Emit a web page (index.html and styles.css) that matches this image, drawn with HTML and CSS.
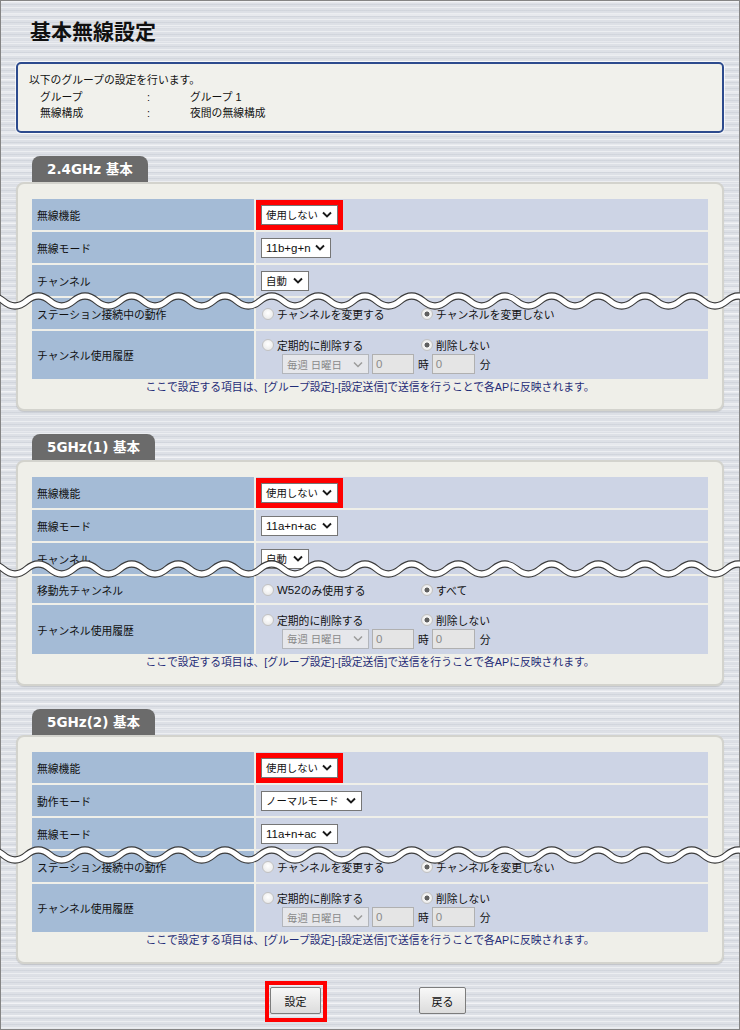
FILE: index.html
```html
<!DOCTYPE html>
<html lang="ja">
<head>
<meta charset="utf-8">
<title>基本無線設定</title>
<link rel="stylesheet" href="styles.css">
</head>
<body>
<div class="page">
  <h1 class="title">基本無線設定</h1>

  <div class="info">
    <p class="info-lead">以下のグループの設定を行います。</p>
    <div class="info-grid">
      <span>グループ</span><span>:</span><span>グループ 1</span>
      <span>無線構成</span><span>:</span><span>夜間の無線構成</span>
    </div>
  </div>

  <section class="sec">
    <div class="tab">2.4GHz 基本</div>
    <div class="panel">
      <div class="rows">
        <div class="lbl">無線機能</div>
        <div class="val"><span class="select w77 hl"><span>使用しない</span><svg class="chev" viewBox="0 0 10 7"><path d="M1 1.5 5 5.5 9 1.5"/></svg></span></div>
        <div class="lbl">無線モード</div>
        <div class="val"><span class="select w70"><span class="lat">11b+g+n</span><svg class="chev" viewBox="0 0 10 7"><path d="M1 1.5 5 5.5 9 1.5"/></svg></span></div>
        <div class="lbl">チャンネル</div>
        <div class="val"><span class="select w48"><span>自動</span><svg class="chev" viewBox="0 0 10 7"><path d="M1 1.5 5 5.5 9 1.5"/></svg></span></div>
        <div class="lbl cut">ステーション接続中の動作
          <svg class="wave wave-s1" viewBox="0 0 740 20"><path class="edge" d="M-20 10q11.667-10 23.333 0t23.333 0t23.333 0t23.333 0t23.333 0t23.333 0t23.333 0t23.333 0t23.333 0t23.333 0t23.333 0t23.333 0t23.333 0t23.333 0t23.333 0t23.333 0t23.333 0t23.333 0t23.333 0t23.333 0t23.333 0t23.333 0t23.333 0t23.333 0t23.333 0t23.333 0t23.333 0t23.333 0t23.333 0t23.333 0t23.333 0t23.333 0t23.333 0t23.333 0"/><path class="band" d="M-20 10q11.667-10 23.333 0t23.333 0t23.333 0t23.333 0t23.333 0t23.333 0t23.333 0t23.333 0t23.333 0t23.333 0t23.333 0t23.333 0t23.333 0t23.333 0t23.333 0t23.333 0t23.333 0t23.333 0t23.333 0t23.333 0t23.333 0t23.333 0t23.333 0t23.333 0t23.333 0t23.333 0t23.333 0t23.333 0t23.333 0t23.333 0t23.333 0t23.333 0t23.333 0t23.333 0"/></svg>
        </div>
        <div class="val"><span class="opt"><span class="radio"></span>チャンネルを変更する</span><span class="opt"><span class="radio on"></span>チャンネルを変更しない</span></div>
        <div class="lbl">チャンネル使用履歴</div>
        <div class="val hist">
          <div class="hist-top"><span class="opt"><span class="radio"></span>定期的に削除する</span><span class="opt"><span class="radio on"></span>削除しない</span></div>
          <div class="hist-bot"><span class="select w87 dis"><span>毎週 日曜日</span><svg class="chev" viewBox="0 0 10 7"><path d="M1 1.5 5 5.5 9 1.5"/></svg></span><span class="inp w42">0</span><span class="unit">時</span><span class="inp w43">0</span><span class="unit unit-last">分</span></div>
        </div>
      </div>
      <p class="note">ここで設定する項目は、[グループ設定]-[設定送信]で送信を行うことで各APに反映されます。</p>
    </div>
  </section>

  <section class="sec">
    <div class="tab">5GHz(1) 基本</div>
    <div class="panel">
      <div class="rows rows-s2">
        <div class="lbl">無線機能</div>
        <div class="val"><span class="select w77 hl"><span>使用しない</span><svg class="chev" viewBox="0 0 10 7"><path d="M1 1.5 5 5.5 9 1.5"/></svg></span></div>
        <div class="lbl">無線モード</div>
        <div class="val"><span class="select w77"><span class="lat">11a+n+ac</span><svg class="chev" viewBox="0 0 10 7"><path d="M1 1.5 5 5.5 9 1.5"/></svg></span></div>
        <div class="lbl">チャンネル</div>
        <div class="val"><span class="select w48"><span>自動</span><svg class="chev" viewBox="0 0 10 7"><path d="M1 1.5 5 5.5 9 1.5"/></svg></span></div>
        <div class="lbl cut">移動先チャンネル
          <svg class="wave wave-s2" viewBox="0 0 740 20"><path class="edge" d="M-20 10q11.667-10 23.333 0t23.333 0t23.333 0t23.333 0t23.333 0t23.333 0t23.333 0t23.333 0t23.333 0t23.333 0t23.333 0t23.333 0t23.333 0t23.333 0t23.333 0t23.333 0t23.333 0t23.333 0t23.333 0t23.333 0t23.333 0t23.333 0t23.333 0t23.333 0t23.333 0t23.333 0t23.333 0t23.333 0t23.333 0t23.333 0t23.333 0t23.333 0t23.333 0t23.333 0"/><path class="band" d="M-20 10q11.667-10 23.333 0t23.333 0t23.333 0t23.333 0t23.333 0t23.333 0t23.333 0t23.333 0t23.333 0t23.333 0t23.333 0t23.333 0t23.333 0t23.333 0t23.333 0t23.333 0t23.333 0t23.333 0t23.333 0t23.333 0t23.333 0t23.333 0t23.333 0t23.333 0t23.333 0t23.333 0t23.333 0t23.333 0t23.333 0t23.333 0t23.333 0t23.333 0t23.333 0t23.333 0"/></svg>
        </div>
        <div class="val"><span class="opt"><span class="radio"></span><span class="lat-s">W52</span>のみ使用する</span><span class="opt"><span class="radio on"></span>すべて</span></div>
        <div class="lbl">チャンネル使用履歴</div>
        <div class="val hist">
          <div class="hist-top"><span class="opt"><span class="radio"></span>定期的に削除する</span><span class="opt"><span class="radio on"></span>削除しない</span></div>
          <div class="hist-bot"><span class="select w87 dis"><span>毎週 日曜日</span><svg class="chev" viewBox="0 0 10 7"><path d="M1 1.5 5 5.5 9 1.5"/></svg></span><span class="inp w42">0</span><span class="unit">時</span><span class="inp w43">0</span><span class="unit unit-last">分</span></div>
        </div>
      </div>
      <p class="note">ここで設定する項目は、[グループ設定]-[設定送信]で送信を行うことで各APに反映されます。</p>
    </div>
  </section>

  <section class="sec">
    <div class="tab">5GHz(2) 基本</div>
    <div class="panel">
      <div class="rows">
        <div class="lbl">無線機能</div>
        <div class="val"><span class="select w77 hl"><span>使用しない</span><svg class="chev" viewBox="0 0 10 7"><path d="M1 1.5 5 5.5 9 1.5"/></svg></span></div>
        <div class="lbl">動作モード</div>
        <div class="val"><span class="select w101"><span>ノーマルモード</span><svg class="chev" viewBox="0 0 10 7"><path d="M1 1.5 5 5.5 9 1.5"/></svg></span></div>
        <div class="lbl">無線モード</div>
        <div class="val"><span class="select w77"><span class="lat">11a+n+ac</span><svg class="chev" viewBox="0 0 10 7"><path d="M1 1.5 5 5.5 9 1.5"/></svg></span></div>
        <div class="lbl cut">ステーション接続中の動作
          <svg class="wave wave-s3" viewBox="0 0 740 20"><path class="edge" d="M-20 10q11.667-10 23.333 0t23.333 0t23.333 0t23.333 0t23.333 0t23.333 0t23.333 0t23.333 0t23.333 0t23.333 0t23.333 0t23.333 0t23.333 0t23.333 0t23.333 0t23.333 0t23.333 0t23.333 0t23.333 0t23.333 0t23.333 0t23.333 0t23.333 0t23.333 0t23.333 0t23.333 0t23.333 0t23.333 0t23.333 0t23.333 0t23.333 0t23.333 0t23.333 0t23.333 0"/><path class="band" d="M-20 10q11.667-10 23.333 0t23.333 0t23.333 0t23.333 0t23.333 0t23.333 0t23.333 0t23.333 0t23.333 0t23.333 0t23.333 0t23.333 0t23.333 0t23.333 0t23.333 0t23.333 0t23.333 0t23.333 0t23.333 0t23.333 0t23.333 0t23.333 0t23.333 0t23.333 0t23.333 0t23.333 0t23.333 0t23.333 0t23.333 0t23.333 0t23.333 0t23.333 0t23.333 0t23.333 0"/></svg>
        </div>
        <div class="val"><span class="opt"><span class="radio"></span>チャンネルを変更する</span><span class="opt"><span class="radio on"></span>チャンネルを変更しない</span></div>
        <div class="lbl">チャンネル使用履歴</div>
        <div class="val hist">
          <div class="hist-top"><span class="opt"><span class="radio"></span>定期的に削除する</span><span class="opt"><span class="radio on"></span>削除しない</span></div>
          <div class="hist-bot"><span class="select w87 dis"><span>毎週 日曜日</span><svg class="chev" viewBox="0 0 10 7"><path d="M1 1.5 5 5.5 9 1.5"/></svg></span><span class="inp w42">0</span><span class="unit">時</span><span class="inp w43">0</span><span class="unit unit-last">分</span></div>
        </div>
      </div>
      <p class="note">ここで設定する項目は、[グループ設定]-[設定送信]で送信を行うことで各APに反映されます。</p>
    </div>
  </section>

  <div class="actions">
    <span class="hl-box"><button class="btn btn-set" type="button">設定</button></span>
    <button class="btn btn-back" type="button">戻る</button>
  </div>
</div>
</body>
</html>
```

FILE: styles.css
```css
html, body {
  margin: 0;
  padding: 0;
  background: #dee1e7;
}

.page {
  width: 740px;
  height: 1030px;
  box-sizing: border-box;
  border: 1px solid #858585;
  padding: 0 15px;
  font-family: "Liberation Sans", "Noto Sans CJK JP", sans-serif;
  font-size: 10.8px;
  color: #111;
  background-color: #dde0e6;
  background-image:
    repeating-linear-gradient(180deg, rgba(255,255,255,0.45) 0 1px, rgba(255,255,255,0) 1px 3px, rgba(110,120,140,0.10) 3px 4px, rgba(255,255,255,0) 4px 6px),
    repeating-linear-gradient(180deg, rgba(255,255,255,0.30) 0 2px, rgba(0,0,0,0) 2px 13px);
}

.title {
  margin: 14px 0 0 14px;
  font: 700 21px/30px "Noto Sans CJK JP", sans-serif;
  color: #111;
}

.info {
  margin-top: 17px;
  border: 2px solid #2d4b8e;
  border-radius: 5px;
  background: #f1f1ec;
  padding: 8px 11px 9.5px;
  line-height: 16.5px;
  box-shadow: 0 0 0 1px rgba(255,255,255,0.7);
}

.info-lead {
  margin: 0;
}

.info-grid {
  display: grid;
  grid-template-columns: 107px 43px auto;
  padding-left: 11px;
}

.sec {
  margin-top: 23px;
}

.tab {
  width: max-content;
  margin-left: 16px;
  height: 26px;
  padding: 0 15px;
  background: #6b6b6b;
  color: #fff;
  border-radius: 8px 8px 0 0;
  font: 700 13.5px/26px "DejaVu Sans", "Noto Sans CJK JP", sans-serif;
}

.panel {
  border: 2px solid #d3d3cd;
  border-radius: 8px;
  background: #efefe9;
  padding: 15px 14px 14px;
  box-shadow: 0 1px 1px rgba(0,0,0,0.12);
}

.rows {
  display: grid;
  grid-template-columns: 222px 452px;
  grid-template-rows: 31px 31px 31px 31px 48px;
  gap: 2px;
}

.rows-s2 {
  grid-template-rows: 31px 31px 31px 27px 49px;
}

.lbl {
  background: #a4bbd6;
  display: flex;
  align-items: center;
  padding-left: 5px;
  color: #111;
}

.val {
  background: #cdd4e5;
  display: flex;
  align-items: center;
  padding-left: 5px;
}

.cut {
  position: relative;
}

.wave {
  position: absolute;
  left: -32px;
  width: 740px;
  height: 20px;
  z-index: 3;
}

.wave-s1 { top: -7px; }
.wave-s2 { top: -17px; }
.wave-s3 { top: -6px; }

.wave .edge {
  fill: none;
  stroke: #3a3a3a;
  stroke-width: 7;
}

.wave .band {
  fill: none;
  stroke: #ffffff;
  stroke-width: 5;
}

.select {
  display: inline-flex;
  align-items: center;
  justify-content: space-between;
  box-sizing: border-box;
  height: 20px;
  border: 1px solid #767676;
  background: #fff;
  padding: 0 5px 0 4px;
  color: #111;
  font-size: 10.4px;
}

.select.hl {
  outline: 5px solid #ff0000;
}

.w48 { width: 48px; }
.w70 { width: 70px; }
.w77 { width: 77px; }
.w87 { width: 87px; }
.w101 { width: 101px; }

.lat {
  font-size: 11.5px;
}

.lat-s {
  font-size: 11.5px;
}

.chev {
  flex: none;
  width: 10px;
  height: 7px;
  fill: none;
  stroke: #1a1a1a;
  stroke-width: 1.9;
}

.select.dis {
  background: #e6e7eb;
  border-color: #b3b6bc;
  color: #8a8a8a;
}

.select.dis .chev {
  stroke: #9b9b9b;
  stroke-width: 1.5;
}

.inp {
  display: inline-flex;
  align-items: center;
  box-sizing: border-box;
  height: 20px;
  margin-left: 3px;
  padding-left: 3px;
  border: 1px solid #b0b0b0;
  background: #e5e5e5;
  color: #8a8a8a;
  font-size: 11.5px;
}

.w42 { width: 42px; }
.w43 { width: 43px; }

.unit {
  margin: 0 0 0 4px;
}

.unit-last {
  margin-left: 5px;
}

.hist {
  flex-direction: column;
  align-items: flex-start;
  justify-content: center;
}

.hist-top {
  height: 18px;
  display: flex;
  align-items: center;
}

.hist-bot {
  height: 20px;
  display: flex;
  align-items: center;
  padding-left: 21px;
}

.opt {
  display: inline-flex;
  align-items: center;
  width: 159px;
}

.radio {
  flex: none;
  width: 12px;
  height: 12px;
  box-sizing: border-box;
  border-radius: 50%;
  border: 1px solid #c2c2c2;
  background: radial-gradient(circle at 50% 40%, #ffffff 0, #ededed 70%, #dedede 100%);
  margin: 0 3px 0 1px;
}

.radio.on {
  background: radial-gradient(circle, #606060 0 2.2px, #f6f6f6 2.8px, #e2e2e2 100%);
}

.note {
  margin: 0;
  text-align: center;
  line-height: 16px;
  color: #1f2c77;
}

.actions {
  margin-top: 17px;
  display: flex;
  align-items: flex-start;
  justify-content: center;
  gap: 92px;
  padding-right: 9px;
}

.hl-box {
  display: flex;
  border: 4px solid #ff0000;
  padding: 2px 2px 4px 1px;
}

.btn {
  height: 27px;
  padding: 0;
  border: 1px solid #7c7c7c;
  border-radius: 2px;
  background: linear-gradient(#f8f8f8, #dcdcdc);
  font: 11px "Noto Sans CJK JP", sans-serif;
  color: #111;
}

.btn-set {
  width: 51px;
}

.btn-back {
  width: 47px;
  margin-top: 6px;
}
```
